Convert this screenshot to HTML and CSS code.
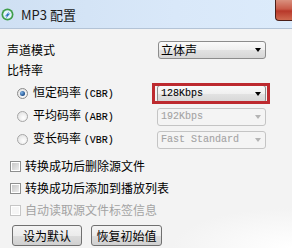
FILE: index.html
```html
<!DOCTYPE html>
<html lang="zh-CN">
  <head>
    <meta charset="UTF-8" />
    <title>MP3 配置</title>
    <link rel="stylesheet" href="styles.css">
  </head>
  <body>
    <div class="titlebar">
      <svg class="app-icon" width="13" height="13" viewBox="0 0 13 13">
        <circle cx="6.5" cy="6.5" r="6" fill="#3f9e4a" />
        <circle cx="6.5" cy="6.5" r="4.3" fill="#e6f3ff" />
        <path d="M3.5 8.8 L8.2 3.4 L7.1 6.2 L9.6 5.1 L4.9 10.4 L5.9 7.6 Z" fill="#2a6fc0" />
      </svg>
      <span class="title">MP3 配置</span>
      <div class="close"></div>
    </div>

    <div class="content">
      <div class="row row-mode">
        <span class="label">声道模式</span>
        <div class="combo combo-mode">
          <span>立体声</span>
          <span class="arrow"></span>
        </div>
      </div>
      <div class="row row-bitrate">
        <span class="label">比特率</span>
      </div>

      <div class="rates">
        <div class="rate-row">
          <span class="radio checked"></span>
          <span class="label">恒定码率 <span class="latin">(CBR)</span></span>
          <div class="combo-wrap">
            <div class="combo">
              <span class="latin">128Kbps</span>
              <span class="arrow"></span>
            </div>
            <div class="highlight"></div>
          </div>
        </div>
        <div class="rate-row">
          <span class="radio"></span>
          <span class="label">平均码率 <span class="latin">(ABR)</span></span>
          <div class="combo-wrap">
            <div class="combo disabled">
              <span class="latin">192Kbps</span>
              <span class="arrow"></span>
            </div>
          </div>
        </div>
        <div class="rate-row">
          <span class="radio"></span>
          <span class="label">变长码率 <span class="latin">(VBR)</span></span>
          <div class="combo-wrap">
            <div class="combo disabled">
              <span class="latin">Fast Standard</span>
              <span class="arrow"></span>
            </div>
          </div>
        </div>
      </div>

      <div class="checks">
        <div class="check-row">
          <span class="checkbox"></span>
          <span class="label">转换成功后删除源文件</span>
        </div>
        <div class="check-row">
          <span class="checkbox"></span>
          <span class="label">转换成功后添加到播放列表</span>
        </div>
        <div class="check-row disabled">
          <span class="checkbox"></span>
          <span class="label">自动读取源文件标签信息</span>
        </div>
      </div>

      <div class="buttons">
        <button class="btn">设为默认</button>
        <button class="btn">恢复初始值</button>
      </div>
    </div>
  </body>
</html>
```

FILE: styles.css
```css
body {
  margin: 0;
  width: 292px;
  height: 248px;
  overflow: hidden;
  font-family: "Noto Sans CJK SC", "Noto Sans", sans-serif;
  font-size: 12px;
  color: #000;
  background: radial-gradient(ellipse 120px 40px at 292px 248px, #ffffff, #f3f3f3);
  background-color: #f3f3f3;
}
.titlebar {
  height: 28px;
  border-bottom: 1px solid #b3c3d6;
  background: linear-gradient(90deg, #cfe0f3, #d9e8f9 60%, #dcebfb);
  display: flex;
  align-items: center;
}
.app-icon {
  margin-left: 1px;
  margin-top: 1px;
}
.title {
  margin-left: 7px;
  margin-top: 1px;
  font-size: 13px;
  color: #1b1b1b;
  line-height: 14px;
}
.close {
  margin-left: auto;
  align-self: flex-start;
  width: 16px;
  height: 20px;
  border-left: 1px solid #4a1e18;
  border-bottom: 1px solid #4a1e18;
  border-radius: 0 0 0 4px;
  background: linear-gradient(#d9907e, #c85a48 45%, #b8382a 55%, #cf6a50);
}
.content {
  padding-left: 7px;
  padding-right: 26px;
}
.label {
  line-height: 14px;
  white-space: nowrap;
}
.latin {
  font-family: "Liberation Mono", monospace;
  font-size: 10px;
  -webkit-text-stroke: 0.1px currentColor;
}
.row {
  height: 18px;
  display: flex;
  align-items: center;
}
.row-mode {
  margin-top: 12px;
}
.row-bitrate {
  margin-top: 2px;
}
.combo {
  box-sizing: border-box;
  width: 109px;
  height: 18px;
  padding: 0 3px 0 3px;
  border: 1px solid #8c8c8c;
  border-radius: 3px;
  background: linear-gradient(#fafafa, #efefef 50%, #e2e2e2 51%, #d6d6d6);
  display: flex;
  align-items: center;
  justify-content: space-between;
  line-height: 14px;
}
.combo-mode {
  width: 108px;
  margin-left: auto;
  padding-left: 2px;
}
.arrow {
  width: 0;
  height: 0;
  border-left: 3.5px solid transparent;
  border-right: 3.5px solid transparent;
  border-top: 4px solid #000;
  margin-right: 1px;
}
.combo.disabled {
  border-color: #c4c4c4;
  background: #f4f4f4;
  color: #a3a3a3;
}
.combo.disabled .arrow {
  border-top-color: #b4b4b4;
}
.rates {
  margin-top: 3px;
}
.rate-row {
  height: 23px;
  display: flex;
  align-items: center;
  padding-left: 10px;
}
.radio {
  box-sizing: border-box;
  width: 11px;
  height: 11px;
  border-radius: 50%;
  border: 1px solid #a6a6a6;
  background: radial-gradient(circle at 60% 65%, #ffffff, #dcdcdc);
  margin-right: 5px;
  display: flex;
  align-items: center;
  justify-content: center;
}
.radio.checked {
  border-color: #8a8a8a;
}
.radio.checked::after {
  content: "";
  width: 5px;
  height: 5px;
  border-radius: 50%;
  background: radial-gradient(circle at 35% 35%, #7fb4e8, #1d4f8c 70%);
}
.combo-wrap {
  margin-left: auto;
  position: relative;
}
.highlight {
  position: absolute;
  box-sizing: border-box;
  left: -5px;
  top: -2px;
  width: 118px;
  height: 21px;
  border: 3px solid #bd2a2f;
}
.checks {
  margin-top: 4px;
}
.check-row {
  height: 22px;
  display: flex;
  align-items: center;
  padding-left: 3px;
}
.checkbox {
  box-sizing: border-box;
  width: 11px;
  height: 11px;
  border: 1px solid #8e8f8f;
  padding: 1px;
  background: #fff;
  margin-right: 4px;
}
.checkbox::after {
  content: "";
  display: block;
  width: 100%;
  height: 100%;
  background: linear-gradient(135deg, #c8c8c8, #ececec);
}
.check-row.disabled {
  color: #a3a3a3;
}
.check-row.disabled .checkbox {
  border-color: #c6c6c6;
}
.check-row.disabled .checkbox::after {
  background: #f6f6f6;
}
.buttons {
  margin-top: 4px;
  padding-left: 5px;
  display: flex;
  gap: 9px;
}
.btn {
  box-sizing: border-box;
  width: 70px;
  height: 21px;
  padding: 0;
  font-family: "Noto Sans CJK SC", "Noto Sans", sans-serif;
  font-size: 12px;
  line-height: 14px;
  color: #000;
  border: 1px solid #707070;
  border-radius: 3px;
  background: linear-gradient(#f4f4f4, #ececec 50%, #dddddd 51%, #d0d0d0);
}
.btn + .btn {
  width: 71px;
}
```
